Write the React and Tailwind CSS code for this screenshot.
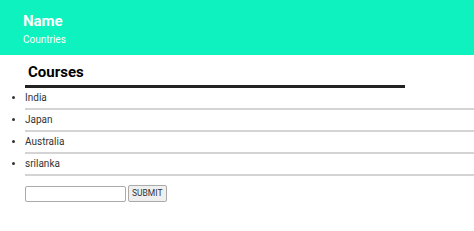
export default function App() {
  const items = ["India", "Japan", "Australia", "srilanka"];
  return (
    <div className="w-[474px] h-[231px] bg-white overflow-hidden" style={{ fontFamily: "Roboto, 'Liberation Sans', Arial, sans-serif" }}>
      <div className="h-[55px] bg-[#0ef2c0] pl-[23px] pt-[12px]">
        <div className="text-[15px] leading-[18px] font-bold text-white">Name</div>
        <div className="mt-[4px] text-[10px] leading-[12px] text-white">Countries</div>
      </div>
      <div className="pl-[25px]">
        <div className="w-[380px] border-b-[3px] border-[#222] pl-[3px] pt-[8px] pb-[4px] text-[15px] leading-[18px] font-bold text-black">Courses</div>
      </div>
      <ul className="list-disc pl-[25px]">
        {items.map((t) => (
          <li key={t} className="h-[22px] border-b-2 border-[#d4d4d4] flex items-center text-[10px] text-[#333] list-item leading-[20px] marker:text-[10px]">
            {t}
          </li>
        ))}
      </ul>
      <div className="pl-[25px] mt-[9px] flex items-center gap-[2px]">
        <input className="w-[101px] h-[16px] border border-[#aaa] rounded-[2px] bg-white" />
        <button className="h-[17px] px-[3px] border border-[#aaa] rounded-[2px] bg-[#efefef] text-[8.5px] text-[#333]">SUBMIT</button>
      </div>
    </div>
  );
}
